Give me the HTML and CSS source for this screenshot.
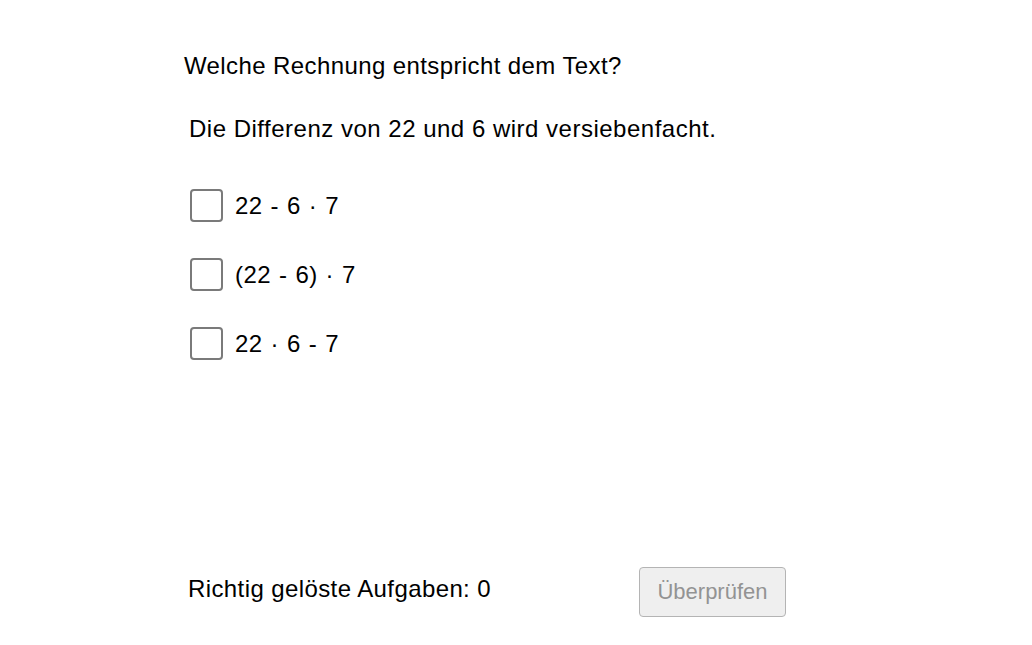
FILE: index.html
```html
<!DOCTYPE html>
<html lang="de">
<head>
    <meta charset="UTF-8">
    <title>Rechnung zum Text</title>
    <link rel="stylesheet" href="styles.css">
</head>
<body>

<div class="task">
    <p class="question">Welche Rechnung entspricht dem Text?</p>
    <p class="statement">Die Differenz von 22 und 6 wird versiebenfacht.</p>

    <div class="options">
        <label class="option"><span class="box"></span>22 - 6 · 7</label>
        <label class="option"><span class="box"></span>(22 - 6) · 7</label>
        <label class="option"><span class="box"></span>22 · 6 - 7</label>
    </div>

    <div class="footer">
        <span class="score">Richtig gelöste Aufgaben: 0</span>
        <button class="check" disabled>Überprüfen</button>
    </div>
</div>

</body>
</html>
```

FILE: styles.css
```css
body {
    margin: 0;
    background: #fff;
    font-family: "Liberation Sans", Arial, sans-serif;
    color: #000;
    letter-spacing: 0.4px;
}
.task {
    width: 620px;
    padding: 50px 0 0 184px;
    height: 567px;
    display: flex;
    flex-direction: column;
}
.question {
    margin: 0;
    font-size: 24px;
    line-height: 32px;
}
.statement {
    margin: 31px 0 0 5px;
    font-size: 24px;
    line-height: 32px;
    letter-spacing: 0.5px;
}
.options {
    margin-top: 44px;
    display: flex;
    flex-direction: column;
    gap: 36px;
}
.option {
    display: flex;
    align-items: center;
    gap: 12px;
    margin-left: 6px;
    font-size: 24px;
    line-height: 32px;
    word-spacing: 1px;
}
.box {
    width: 29px;
    height: 29px;
    border: 2px solid #7a7a7a;
    border-radius: 4px;
}
.footer {
    margin-top: auto;
    display: flex;
    align-items: center;
    padding-left: 4px;
}
.score {
    font-size: 24px;
    width: 451px;
    padding-bottom: 6px;
}
.check {
    width: 147px;
    height: 50px;
    background: #efefef;
    border: 1px solid #b4b4b4;
    border-radius: 4px;
    color: #939393;
    font-family: "Liberation Sans", Arial, sans-serif;
    font-size: 22px;
    letter-spacing: 0;
}
```
